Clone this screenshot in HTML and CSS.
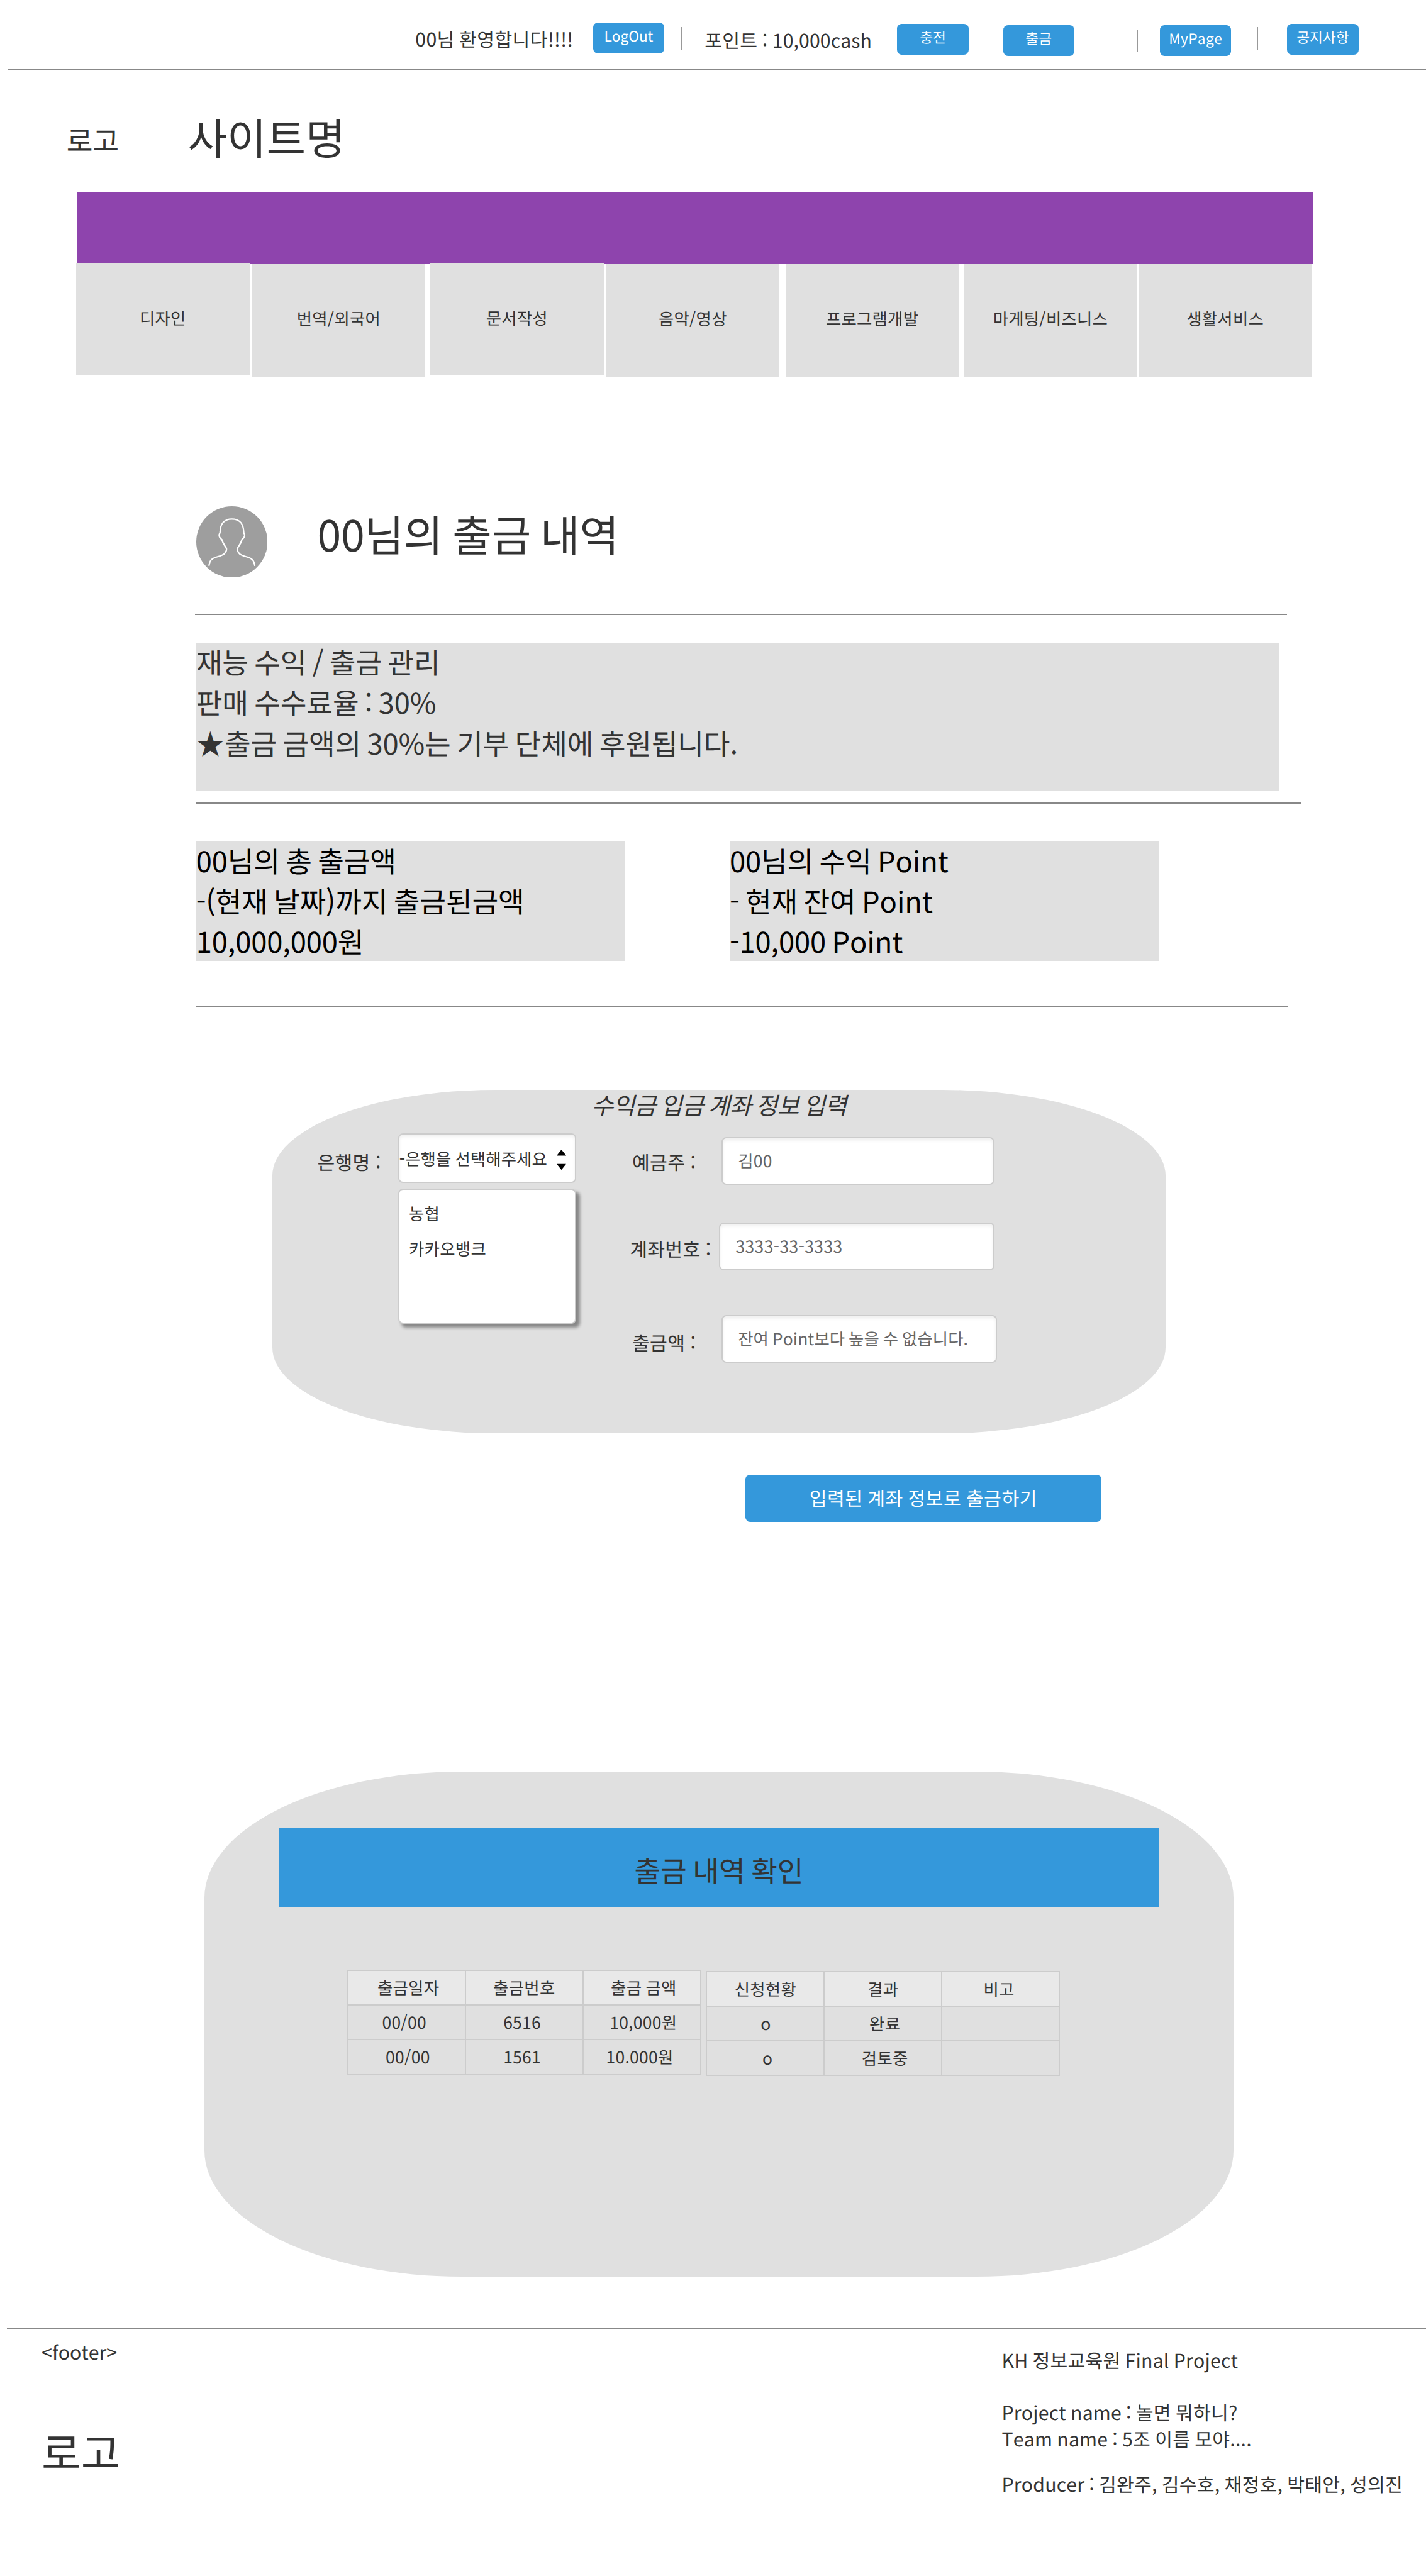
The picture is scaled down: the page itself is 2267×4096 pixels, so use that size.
FILE: index.html
```html
<!DOCTYPE html>
<html lang="ko">
<head>
<meta charset="utf-8">
<title>출금 내역</title>
<link rel="stylesheet" href="styles.css">
</head>
<body>
<header>
  <nav class="topbar">
    <span class="welcome">00님 환영합니다!!!!</span>
    <a class="btn logout">LogOut</a>
    <i class="sep sep-a"></i>
    <span class="point">포인트 : 10,000cash</span>
    <a class="btn charge">충전</a>
    <a class="btn withdraw">출금</a>
    <i class="sep sep-b"></i>
    <a class="btn mypage">MyPage</a>
    <i class="sep sep-c"></i>
    <a class="btn notice">공지사항</a>
  </nav>
  <div class="brand">
    <span class="logo">로고</span>
    <span class="site">사이트명</span>
  </div>
  <div class="banner"></div>
  <nav class="menu">
    <a class="tile raised">디자인</a>
    <a class="tile gap-s">번역/외국어</a>
    <a class="tile gap-m raised">문서작성</a>
    <a class="tile gap-s">음악/영상</a>
    <a class="tile gap-l">프로그램개발</a>
    <a class="tile gap-m">마게팅/비즈니스</a>
    <a class="tile gap-xs">생활서비스</a>
  </nav>
</header>

<main>
  <section class="heading">
    <svg class="avatar" viewBox="0 0 120 120">
      <circle cx="60" cy="60" r="60" fill="#9e9e9e"/>
      <path d="M21.5 99.5C23 90 27 87.500 34 85.500C44 83 47 81 48.500 78.500C50 76 51.200 75 51 72C50.500 68 45.500 65.500 43 56C40 54 38.500 51.500 38.500 48.500C38.500 46.500 39.800 46 40 44C40.500 31 45 21.500 60 21.500C75 21.500 79.500 31 80 44C80.200 46 81.500 46.500 81.500 48.500C81.500 51.500 80 54 77 56C74.500 65.500 69.500 68 69 72C68.800 75 70 76 71.500 78.500C73 81 76 83 86 85.500C93 87.500 97 90 98.500 99.500" fill="none" stroke="#fff" stroke-width="2.400" stroke-linecap="round"/>
    </svg>
    <h1>00님의 출금 내역</h1>
  </section>
  <hr class="rule rule-1">
  <section class="info">
    <p>재능 수익 / 출금 관리</p>
    <p>판매 수수료율 : 30%</p>
    <p>★출금 금액의 30%는 기부 단체에 후원됩니다.</p>
  </section>
  <hr class="rule rule-2">
  <section class="totals">
    <div class="total">
      <p>00님의 총 출금액</p>
      <p>-(현재 날짜)까지 출금된금액</p>
      <p>10,000,000원</p>
    </div>
    <div class="total">
      <p>00님의 수익 Point</p>
      <p>- 현재 잔여 Point</p>
      <p>-10,000 Point</p>
    </div>
  </section>
  <hr class="rule rule-3">

  <section class="account">
    <h2>수익금 입금 계좌 정보 입력</h2>
    <div class="form">
      <label class="bank-label">은행명 :</label>
      <div class="bank">
        <div class="select">
          <span>-은행을 선택해주세요</span>
          <svg class="arrows" viewBox="0 0 16 34"><path d="M8 0L16 10H0ZM0 24H16L8 34Z"/></svg>
        </div>
        <ul class="options">
          <li>농협</li>
          <li>카카오뱅크</li>
        </ul>
      </div>
      <div class="fields">
        <div class="field owner"><label>예금주 :</label><div class="input">김00</div></div>
        <div class="field number"><label>계좌번호 :</label><div class="input">3333-33-3333</div></div>
        <div class="field amount"><label>출금액 :</label><div class="input">잔여 Point보다 높을 수 없습니다.</div></div>
      </div>
    </div>
  </section>
  <a class="submit">입력된 계좌 정보로 출금하기</a>

  <section class="history">
    <h2>출금 내역 확인</h2>
    <div class="tables">
      <div class="grid">
        <div class="cell head c-date">출금일자</div><div class="cell head c-no">출금번호</div><div class="cell head c-sum">출금 금액</div>
        <div class="cell c-date1">00/00</div><div class="cell c-num">6516</div><div class="cell c-sum1">10,000원</div>
        <div class="cell c-date2">00/00</div><div class="cell c-num">1561</div><div class="cell c-sum2">10.000원</div>
      </div>
      <div class="grid lower">
        <div class="cell head c-state">신청현황</div><div class="cell head c-result">결과</div><div class="cell head c-note">비고</div>
        <div class="cell c-o1">o</div><div class="cell c-done">완료</div><div class="cell"></div>
        <div class="cell c-o2">o</div><div class="cell c-review">검토중</div><div class="cell"></div>
      </div>
    </div>
  </section>
</main>

<hr class="rule rule-footer">
<footer>
  <div class="foot-left">
    <p class="foot-tag">&lt;footer&gt;</p>
    <p class="foot-logo">로고</p>
  </div>
  <div class="foot-right">
    <p>KH 정보교육원 Final Project</p>
    <p class="project">Project name : 놀면 뭐하니?</p>
    <p>Team name : 5조 이름 모야....</p>
    <p class="producer">Producer : 김완주, 김수호, 채정호, 박태안, 성의진</p>
  </div>
</footer>
</body>
</html>
```

FILE: styles.css
```css
/* 1rem is ten design pixels; the design is 2400 x 4336 */
html { font-size: 9.4458px; background: #fff; }
* { box-sizing: border-box; margin: 0; padding: 0; }
body {
  width: 240rem;
  height: 433.6rem;
  overflow: hidden;
  color: #333;
  font-family: "Noto Sans CJK KR", sans-serif;
  font-size: 3.2rem;
  line-height: 4.6rem;
  letter-spacing: .03rem;
  word-spacing: -.16rem;
  font-kerning: none;
  text-rendering: geometricPrecision;
  white-space: nowrap;
}

/* top bar */
.topbar {
  display: flex;
  align-items: flex-start;
  height: 11.7rem;
  margin-left: 1.4rem;
  border-bottom: 2px solid #888;
}
.welcome { margin: 4.25rem 0 0 68.5rem; width: 29.9rem; letter-spacing: .04rem; }
.point { margin: 4.4rem 0 0 3.9rem; width: 32.4rem; letter-spacing: .01rem; word-spacing: -.1rem; }
.btn {
  width: 12rem;
  height: 5.2rem;
  border-radius: .8rem;
  background: #3498db;
  color: #fff;
  font-size: 2.4rem;
  line-height: 4.4rem;
  letter-spacing: 0;
  text-align: center;
}
.logout { margin-top: 3.8rem; }
.charge { margin-top: 4rem; }
.withdraw { margin: 4.2rem 0 0 5.8rem; }
.mypage { margin: 4.2rem 0 0 3.7rem; letter-spacing: .04rem; }
.notice { margin: 4rem 0 0 4.9rem; }
.sep { width: 2px; height: 3.8rem; background: #999; flex: none; }
.sep-a { margin: 4.6rem 0 0 2.7rem; }
.sep-b { margin: 5rem 0 0 10.5rem; }
.sep-c { margin: 4.6rem 0 0 4.3rem; }

/* brand and menu */
.brand { display: flex; height: 20.7rem; letter-spacing: 0; }
.logo { margin: 8.3rem 0 0 11.2rem; width: 20.4rem; font-size: 4.8rem; line-height: 7rem; }
.site { margin: 6.1rem 0 0; font-size: 7.2rem; line-height: 10.4rem; }
.banner { width: 208rem; height: 12rem; margin-left: 13rem; background: #8e44ad; }
.menu { display: flex; margin-left: 12.8rem; height: 19rem; }
.tile {
  width: 29.2rem;
  height: 19rem;
  background: #e0e0e0;
  font-size: 2.8rem;
  line-height: 18.5rem;
  letter-spacing: .024rem;
  text-align: center;
}
.raised { margin-top: -.2rem; }
.gap-xs { margin-left: .2rem; }
.gap-s { margin-left: .4rem; }
.gap-m { margin-left: .8rem; }
.gap-l { margin-left: 1rem; }

/* page heading */
.heading { display: flex; margin: 21.8rem 0 0 33rem; height: 18.1rem; }
.avatar { width: 12rem; height: 12rem; }
h1 {
  margin: -.6rem 0 0 8.4rem;
  font-size: 7.2rem;
  line-height: 10.4rem;
  font-weight: 400;
  letter-spacing: -.02rem;
  word-spacing: -.4rem;
}
.rule { height: 2px; border: 0; background: #888; }
.rule-1 { margin-left: 32.8rem; width: 183.8rem; }
.rule-2 { margin: 1.9rem 0 0 33rem; width: 186rem; }
.rule-3 { margin: 7.5rem 0 0 33rem; width: 183.8rem; }

.info {
  margin: 4.7rem 0 0 33rem;
  width: 182.2rem;
  height: 25rem;
  background: #e0e0e0;
}
.info, .total {
  display: flow-root;
  font-size: 4.8rem;
  line-height: 6.8rem;
  letter-spacing: -.016rem;
  word-spacing: -.33rem;
}
.info p, .total p { height: 6.8rem; margin-top: -.2rem; margin-bottom: .2rem; }
.totals { display: flex; gap: 17.6rem; margin: 6.3rem 0 0 33rem; }
.total {
  width: 72.2rem;
  height: 20.2rem;
  background: #e0e0e0;
  color: #000;
}

/* account form */
.account {
  margin: 13.9rem 0 0 45.8rem;
  width: 150.4rem;
  height: 57.8rem;
  padding-top: .3rem;
  border-radius: 25%;
  background: #e0e0e0;
}
.account h2 {
  height: 7.1rem;
  font-size: 4rem;
  line-height: 4.4rem;
  font-weight: 400;
  font-style: italic;
  text-align: center;
  letter-spacing: -.06rem;
  word-spacing: -.28rem;
}
.form { display: flex; align-items: flex-start; }
.form label { word-spacing: -.05rem; }
.bank-label { margin: 2.45rem 0 0 7.6rem; width: 13.6rem; }
.bank { width: 30rem; }
.select {
  display: flex;
  align-items: center;
  justify-content: space-between;
  height: 8.3rem;
  padding-right: 1.5rem;
  border: 2px solid #ccc;
  border-radius: .8rem;
  background: #fff;
  box-shadow: inset 0 .4rem .6rem rgba(0, 0, 0, .06);
  font-size: 2.8rem;
  letter-spacing: .01rem;
}
.arrows { width: 1.6rem; height: 3.4rem; margin-top: .4rem; }
.options {
  height: 22.7rem;
  margin-top: 1rem;
  padding: .9rem 0 0 1.6rem;
  border: 2px solid #ccc;
  border-radius: .8rem;
  background: #fff;
  box-shadow: .6rem .6rem .6rem rgba(0, 0, 0, .4);
  font-size: 2.8rem;
  line-height: 6rem;
  list-style: none;
}
.fields { margin-left: 9rem; }
.field { display: flex; align-items: flex-start; height: 8rem; }
.owner { margin-top: .6rem; }
.number { margin-top: 6.4rem; }
.amount { margin-top: 7.6rem; }
.owner label { margin: 1.85rem 0 0 .4rem; width: 15rem; }
.number label { margin-top: 2.05rem; width: 15rem; }
.amount label { margin: 2.25rem 0 0 .4rem; width: 15rem; }
.input {
  width: 46rem;
  height: 8rem;
  padding-left: 2.6rem;
  border: 2px solid #ccc;
  border-radius: .8rem;
  background: #fff;
  box-shadow: inset 0 .4rem .6rem rgba(0, 0, 0, .06);
  color: #666;
  font-size: 2.8rem;
  line-height: 7.4rem;
}
.number .input { width: 46.4rem; letter-spacing: .045rem; }
.amount .input { width: 46.4rem; letter-spacing: .01rem; word-spacing: -.18rem; }
.submit {
  display: block;
  width: 60rem;
  height: 8rem;
  margin: 7rem 0 0 125.4rem;
  border-radius: .8rem;
  background: #3498db;
  color: #fff;
  line-height: 7.8rem;
  text-align: center;
  letter-spacing: .056rem;
}

/* history */
.history {
  width: 173.2rem;
  height: 85rem;
  margin: 42rem 0 0 34.4rem;
  padding-top: 9.4rem;
  border-radius: 25%;
  background: #e0e0e0;
}
.history h2 {
  width: 148rem;
  height: 13.4rem;
  margin-left: 12.6rem;
  background: #3498db;
  font-size: 4.8rem;
  line-height: 14.2rem;
  font-weight: 400;
  letter-spacing: -.016rem;
  word-spacing: -.3rem;
  text-align: center;
}
.tables { display: flex; align-items: flex-start; gap: .8rem; margin: 10.6rem 0 0 24rem; }
.grid {
  display: grid;
  grid-template-columns: repeat(3, 19.8rem);
  grid-auto-rows: 5.8rem;
  border: solid #ccc;
  border-width: 2px 0 0 2px;
  font-size: 2.8rem;
  line-height: 5.4rem;
}
.lower { margin-top: .2rem; }
.cell { border: solid #ccc; border-width: 0 2px 2px 0; }
.head { background: #e9e9e9; }
.c-date { padding-left: 4.9rem; }
.c-no { padding-left: 4.6rem; }
.c-sum { padding-left: 4.6rem; }
.c-date1 { padding-left: 5.7rem; }
.c-date2 { padding-left: 6.3rem; }
.c-num { padding-left: 6.3rem; }
.c-sum1 { padding-left: 4.4rem; }
.c-sum2 { padding-left: 3.8rem; }
.c-state { padding-left: 4.6rem; }
.c-result { padding-left: 7.2rem; }
.c-note { padding-left: 6.9rem; }
.c-o1 { padding-left: 9rem; }
.c-o2 { padding-left: 9.3rem; }
.c-done { padding-left: 7.5rem; }
.c-review { padding-left: 6.2rem; }

/* footer */
.rule-footer { margin: 8.7rem 0 0 1.2rem; }
footer { display: flex; letter-spacing: .02rem; }
.foot-left { width: 161.6rem; padding-left: 7rem; }
.foot-tag { margin-top: 1.5rem; letter-spacing: 0; }
.foot-logo { margin-top: 9.15rem; font-size: 7.2rem; line-height: 10.4rem; }
.foot-right { margin: 3rem 0 0 7rem; line-height: 4.4rem; }
.project { margin-top: 4.4rem; }
.producer { margin-top: 3.2rem; }
```
